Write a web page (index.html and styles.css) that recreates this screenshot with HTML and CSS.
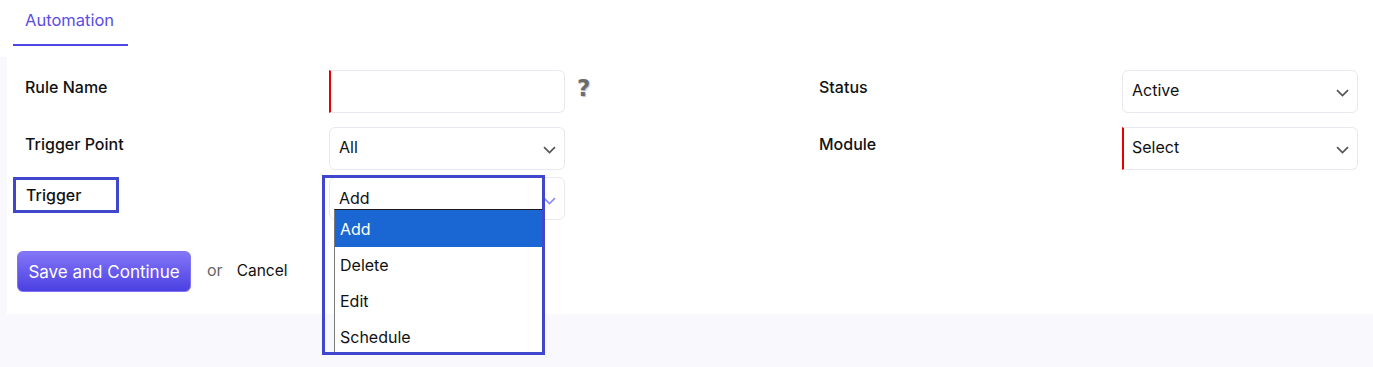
FILE: index.html
```html
<!DOCTYPE html>
<html lang="en">
<head>
<meta charset="utf-8">
<title>Automation</title>
<link rel="stylesheet" href="styles.css">
</head>
<body>
<div class="tabs">
  <div class="tab">Automation</div>
</div>
<div class="content">
  <div class="card">
    <div class="row row-1">
      <div class="label">Rule Name</div>
      <div class="control required"><input class="input" type="text"></div>
      <div class="help">?</div>
      <div class="label">Status</div>
      <div class="control"><div class="select"><span>Active</span><svg class="chev" width="13" height="8" viewBox="0 0 13 8"><path d="M1 1.2l5.5 5.3 5.5-5.3" fill="none" stroke="#555" stroke-width="1.7"/></svg></div></div>
    </div>
    <div class="row row-2">
      <div class="label">Trigger Point</div>
      <div class="control"><div class="select"><span>All</span><svg class="chev" width="13" height="8" viewBox="0 0 13 8"><path d="M1 1.2l5.5 5.3 5.5-5.3" fill="none" stroke="#555" stroke-width="1.7"/></svg></div></div>
      <div class="help"></div>
      <div class="label">Module</div>
      <div class="control required"><div class="select"><span>Select</span><svg class="chev" width="13" height="8" viewBox="0 0 13 8"><path d="M1 1.2l5.5 5.3 5.5-5.3" fill="none" stroke="#555" stroke-width="1.7"/></svg></div></div>
    </div>
    <div class="row row-3">
      <div class="label-cell"><div class="label boxed">Trigger</div></div>
      <div class="control open">
        <div class="select focused"><span>Add</span><svg class="chev" width="13" height="8" viewBox="0 0 13 8"><path d="M1 1.2l5.5 5.3 5.5-5.3" fill="none" stroke="#8b8df2" stroke-width="1.7"/></svg></div>
        <ul class="listbox">
          <li class="option selected">Add</li>
          <li class="option">Delete</li>
          <li class="option">Edit</li>
          <li class="option">Schedule</li>
        </ul>
        <div class="highlight"></div>
      </div>
    </div>
    <div class="actions">
      <button class="btn-primary" type="button">Save and Continue</button>
      <span class="or">or</span>
      <a class="cancel">Cancel</a>
    </div>
  </div>
</div>
</body>
</html>
```
FILE: styles.css
```css
* { box-sizing: border-box; }
html, body {
  margin: 0;
  padding: 0;
}
body {
  background: #f8f8fd;
  font-family: Inter, "Noto Sans", "Liberation Sans", sans-serif;
  color: #111;
  width: 1373px;
  height: 367px;
  overflow: hidden;
}
.tabs {
  background: #fff;
  height: 57px;
  padding-left: 13px;
}
.tab {
  display: inline-block;
  padding: 10px 0 14px 12px;
  line-height: 20px;
  font-size: 16.5px;
  color: #5a4de6;
  border-bottom: 2px solid #4f46e5;
  width: 115px;
}
.content {
  padding-left: 7px;
}
.card {
  background: #fff;
  padding: 13px 15px 22px 18px;
}
.row {
  display: grid;
  grid-template-columns: 304px 236px 254px 303px 236px;
  align-items: start;
}
.row-1 { margin-bottom: 14px; }
.row-2 { margin-bottom: 7px; }
.label {
  font-size: 16px;
  font-weight: 500;
  line-height: 20px;
  padding-top: 7px;
  color: #111;
}
.label-cell { margin-left: -12px; }
.label.boxed {
  width: 106px;
  height: 36px;
  border: 3px solid #4047cc;
  padding: 5px 0 0 10px;
}
.control {
  position: relative;
  height: 43px;
}
.input, .select {
  width: 236px;
  height: 43px;
  border: 1px solid #e8e8ee;
  border-radius: 6px;
  background: #fff;
  font-family: inherit;
  font-size: 16px;
}
.input { display: block; padding: 0 9px; outline: none; }
.required .input, .required .select {
  border-left: 2px solid #e80000;
  border-top-left-radius: 0;
  border-bottom-left-radius: 0;
}
.select {
  display: flex;
  align-items: center;
  justify-content: space-between;
  padding: 0 8px 3px 9px;
  color: #111;
}
.required .select { padding-left: 8px; }
.select.focused { align-items: flex-start; padding-top: 10px; padding-bottom: 0; }
.chev { display: block; margin-top: 5px; }
.select.focused .chev { margin-top: 9px; }
.help {
  padding: 6px 0 0 12px;
  font-size: 23px;
  font-weight: 800;
  line-height: 24px;
  color: #6b6b6b;
  text-shadow: 1px 1px 1px #b9c4d6;
  font-family: "DejaVu Sans", sans-serif;
}
.listbox {
  position: absolute;
  left: 5px;
  top: 32px;
  width: 210px;
  height: 143px;
  overflow: hidden;
  margin: 0;
  padding: 0;
  list-style: none;
  background: #fff;
  border-top: 1px solid #1a1a1a;
  border-left: 1px solid #7a7a7a;
  z-index: 2;
}
.option {
  height: 36px;
  line-height: 36px;
  padding-left: 5px;
  font-size: 16px;
  color: #111;
}
.option.selected {
  height: 37px;
  line-height: 38px;
  background: #1a66d2;
  color: #fff;
}
.highlight {
  position: absolute;
  left: -7px;
  top: -2px;
  width: 223px;
  height: 180px;
  border: 3px solid #4047cc;
  z-index: 3;
}
.actions {
  display: flex;
  align-items: center;
  margin-top: 31px;
  margin-left: -8px;
}
.btn-primary {
  width: 174px;
  height: 41px;
  border: 1px solid #7e72f2;
  border-radius: 6px;
  background: linear-gradient(#8476f7, #4b40e2);
  color: #fff;
  font-family: inherit;
  font-size: 17px;
  font-weight: 400;
  padding: 0;
}
.or {
  margin-left: 16px;
  color: #666;
  font-size: 16px;
  margin-top: -3px;
}
.cancel {
  margin-left: 14px;
  color: #111;
  font-size: 15.5px;
  margin-top: -3px;
}
```
